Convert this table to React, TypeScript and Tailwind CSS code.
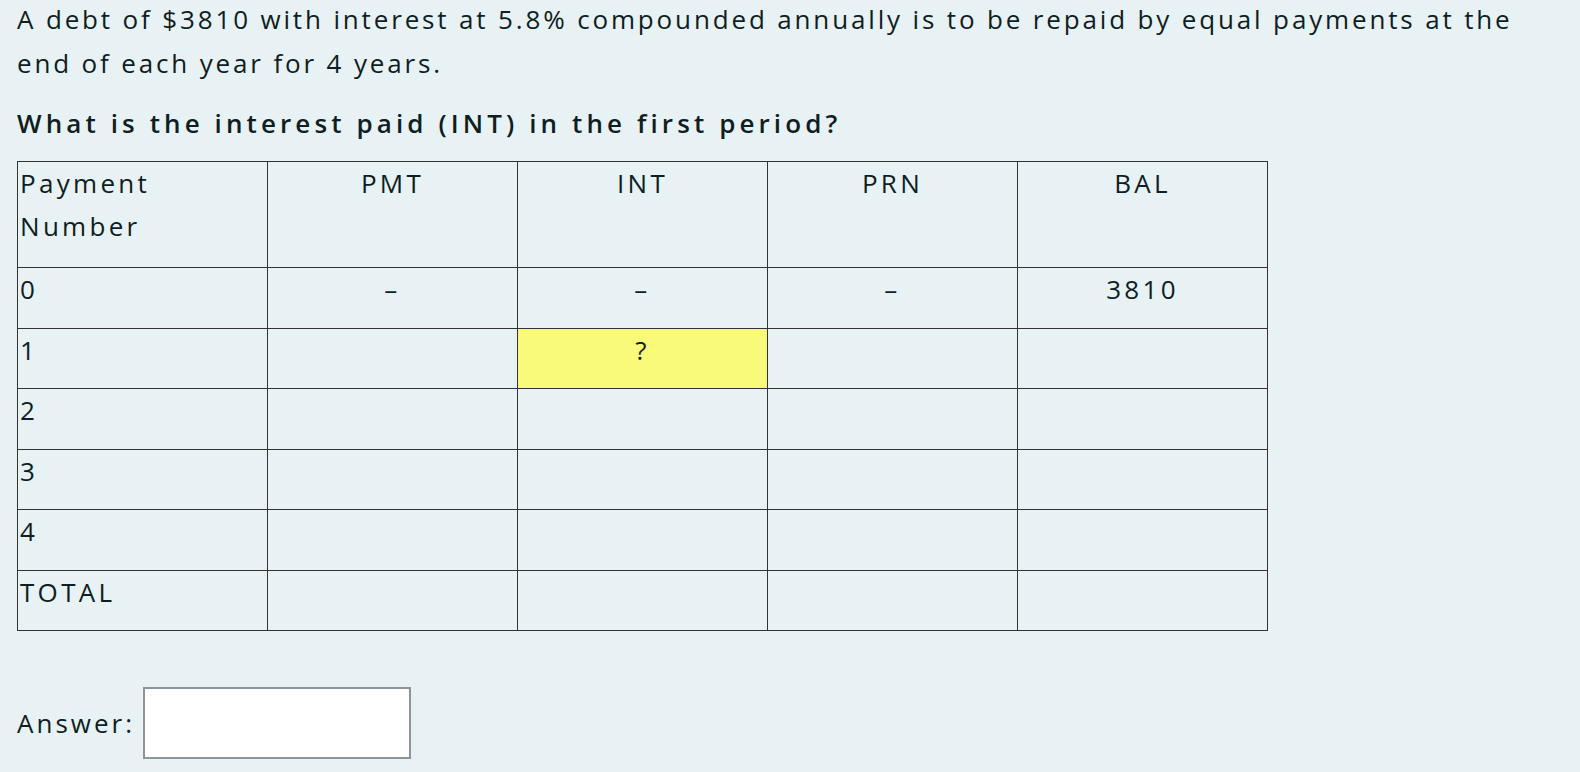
const rows = [
  { n: "0", pmt: "–", int: "–", prn: "–", bal: "3810" },
  { n: "1", pmt: "", int: "?", prn: "", bal: "", highlight: true },
  { n: "2", pmt: "", int: "", prn: "", bal: "" },
  { n: "3", pmt: "", int: "", prn: "", bal: "" },
  { n: "4", pmt: "", int: "", prn: "", bal: "" },
  { n: "TOTAL", pmt: "", int: "", prn: "", bal: "" },
];

const App = () => {
  return (
    <div
      className="min-h-screen bg-[#e8f1f4] text-[#0e1e22] px-[17px] pt-[1px]"
      style={{ fontFamily: '"Open Sans", "Liberation Sans", sans-serif' }}
    >
      <p className="text-[26px] leading-[44px] tracking-[2.85px] max-w-[1540px] -mt-[4px]">
        A debt of $3810 with interest at 5.8% compounded annually is to be repaid by equal payments at the end of each
        year for 4 years.
      </p>

      <p className="text-[26px] leading-[44px] font-semibold tracking-[4.1px] mt-[16px]">
        What is the interest paid (INT) in the first period?
      </p>

      <table className="mt-[16px] border-collapse text-[26px] leading-[43px] tracking-[3.3px]">
        <thead>
          <tr className="h-[106px]">
            <th className="w-[250px] border border-[#333] align-top text-left font-normal px-[2px]">
              Payment
              <br />
              Number
            </th>
            <th className="w-[250px] border border-[#333] align-top font-normal">PMT</th>
            <th className="w-[250px] border border-[#333] align-top font-normal">INT</th>
            <th className="w-[250px] border border-[#333] align-top font-normal">PRN</th>
            <th className="w-[250px] border border-[#333] align-top font-normal">BAL</th>
          </tr>
        </thead>
        <tbody>
          {rows.map((r) => (
            <tr key={r.n} className="h-[60.5px]">
              <td className="border border-[#333] align-top px-[2px]">{r.n}</td>
              <td className="border border-[#333] align-top text-center">{r.pmt}</td>
              <td
                className={
                  r.highlight
                    ? "border border-[#333] align-top text-center bg-[#f9f97a]"
                    : "border border-[#333] align-top text-center"
                }
              >
                {r.int}
              </td>
              <td className="border border-[#333] align-top text-center">{r.prn}</td>
              <td className="border border-[#333] align-top text-center">{r.bal}</td>
            </tr>
          ))}
        </tbody>
      </table>

      <div className="flex items-center mt-[56px] gap-[8px]">
        <span className="text-[26px] tracking-[3px]">Answer:</span>
        <input type="text" className="w-[268px] h-[72px] bg-white border-2 border-[#8c959b] outline-none" />
      </div>
    </div>
  );
};

export default App;
